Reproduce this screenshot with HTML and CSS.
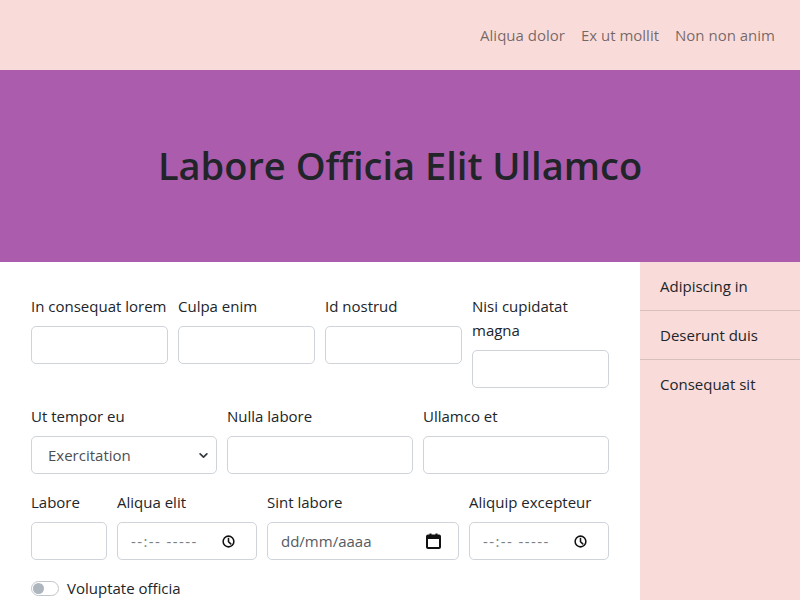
FILE: index.html
```html
<!DOCTYPE html>
<html lang="la">
<head>
<meta charset="utf-8">
<title>Labore Officia Elit Ullamco</title>
<link rel="stylesheet" href="styles.css">
</head>
<body>
<header class="navbar">
  <nav class="nav-links">
    <a href="#">Aliqua dolor</a>
    <a href="#">Ex ut mollit</a>
    <a href="#">Non non anim</a>
  </nav>
</header>
<section class="hero">
  <h1>Labore Officia Elit Ullamco</h1>
</section>
<div class="main">
  <form class="form">
    <div class="row row-4">
      <div class="field"><label>In consequat lorem</label><input class="control" type="text"></div>
      <div class="field"><label>Culpa enim</label><input class="control" type="text"></div>
      <div class="field"><label>Id nostrud</label><input class="control" type="text"></div>
      <div class="field"><label>Nisi cupidatat magna</label><input class="control" type="text"></div>
    </div>
    <div class="row row-3">
      <div class="field"><label>Ut tempor eu</label>
        <div class="select-wrap">
          <select class="control select"><option>Exercitation</option></select>
          <svg class="chev" width="9" height="9" viewBox="0 0 16 16"><path d="M2 5l6 6 6-6" fill="none" stroke="#343a40" stroke-width="3" stroke-linecap="round" stroke-linejoin="round"/></svg>
        </div>
      </div>
      <div class="field"><label>Nulla labore</label><input class="control" type="text"></div>
      <div class="field"><label>Ullamco et</label><input class="control" type="text"></div>
    </div>
    <div class="row row-mixed">
      <div class="field"><label>Labore</label><input class="control" type="text"></div>
      <div class="field"><label>Aliqua elit</label>
        <div class="icon-wrap">
          <input class="control time" type="text" placeholder="--:-- -----">
          <svg class="ico clock" width="13" height="13" viewBox="0 0 16 16"><circle cx="8" cy="8" r="6.6" fill="none" stroke="#111" stroke-width="1.9"/><path d="M8 4.2V8.3l2.8 2.6" fill="none" stroke="#111" stroke-width="1.9" stroke-linecap="round"/></svg>
        </div>
      </div>
      <div class="field"><label>Sint labore</label>
        <div class="icon-wrap">
          <input class="control date" type="text" placeholder="dd/mm/aaaa">
          <svg class="ico cal" width="15" height="16" viewBox="0 0 15 16"><rect x="1" y="2.5" width="13" height="12.5" rx="1" fill="none" stroke="#111" stroke-width="2"/><rect x="1" y="2.5" width="13" height="3.5" fill="#111"/><rect x="3.5" y="0.5" width="2" height="3" fill="#111"/><rect x="9.5" y="0.5" width="2" height="3" fill="#111"/></svg>
        </div>
      </div>
      <div class="field"><label>Aliquip excepteur</label>
        <div class="icon-wrap">
          <input class="control time" type="text" placeholder="--:-- -----">
          <svg class="ico clock" width="13" height="13" viewBox="0 0 16 16"><circle cx="8" cy="8" r="6.6" fill="none" stroke="#111" stroke-width="1.9"/><path d="M8 4.2V8.3l2.8 2.6" fill="none" stroke="#111" stroke-width="1.9" stroke-linecap="round"/></svg>
        </div>
      </div>
    </div>
    <div class="switch-row">
      <span class="switch"><span class="knob"></span></span>
      <span class="switch-label">Voluptate officia</span>
    </div>
  </form>
  <aside class="sidebar">
    <ul class="list">
      <li>Adipiscing in</li>
      <li>Deserunt duis</li>
      <li>Consequat sit</li>
    </ul>
  </aside>
</div>
</body>
</html>
```
FILE: styles.css
```css
* { box-sizing: border-box; }
html, body { margin: 0; padding: 0; }
body {
  font-family: "Open Sans", "Noto Sans", sans-serif;
  font-size: 15px;
  line-height: 24px;
  color: #212529;
  background: #fff;
}
.navbar {
  height: 70px;
  background: #f9dbd9;
  display: flex;
  align-items: center;
  justify-content: flex-end;
  padding: 0 17px 0 0;
}
.nav-links { display: flex; }
.nav-links a {
  color: rgba(0,0,0,.55);
  text-decoration: none;
  padding: 0 8px;
}
.hero {
  height: 192px;
  background: #ac5cac;
  display: flex;
  align-items: center;
  justify-content: center;
}
.hero h1 {
  margin: 0;
  font-size: 38px;
  font-weight: 600;
  line-height: 1.2;
  color: #212529;
}
.main {
  display: grid;
  grid-template-columns: 640px 160px;
  min-height: 338px;
}
.form {
  padding: 32px 31px 0 31px;
  display: flex;
  flex-direction: column;
  gap: 16px;
}
.row { display: grid; column-gap: 10px; align-items: start; }
.row-4 { grid-template-columns: repeat(4, 1fr); }
.row-3 { grid-template-columns: repeat(3, 1fr); }
.row-mixed { grid-template-columns: 76fr 140fr 192fr 140fr; }
.field { display: flex; flex-direction: column; min-width: 0; }
.field label { margin-bottom: 8px; }
.control {
  display: block;
  width: 100%;
  height: 38px;
  border: 1px solid #ced4da;
  border-radius: 5px;
  background: #fff;
  font: inherit;
  color: #212529;
  padding: 0 12px;
  margin: 0;
}
.select-wrap, .icon-wrap { position: relative; }
.select {
  appearance: none;
  -webkit-appearance: none;
  padding-left: 16px;
  color: #4a4f55;
}
.chev { position: absolute; right: 9px; top: 15px; }
.time, .date { padding-left: 13px; }
.time::placeholder { color: #7a7f85; letter-spacing: 1.4px; }
.date::placeholder { color: #555b61; }
.ico { position: absolute; }
.clock { right: 22px; top: 13px; }
.cal { right: 18px; top: 11px; }
.switch-row {
  display: flex;
  align-items: center;
  gap: 8px;
}
.switch {
  width: 28px;
  height: 15px;
  border: 1px solid #bfc5cb;
  border-radius: 8px;
  display: flex;
  align-items: center;
  padding-left: 1px;
}
.knob {
  width: 11px;
  height: 11px;
  border-radius: 50%;
  background: #adb5bd;
}
.sidebar { background: #f9dbd9; }
.list { list-style: none; margin: 0; padding: 0; }
.list li {
  padding: 12px 20px;
  border-bottom: 1px solid rgba(0,0,0,.125);
}
.list li:last-child { border-bottom: none; }
```
